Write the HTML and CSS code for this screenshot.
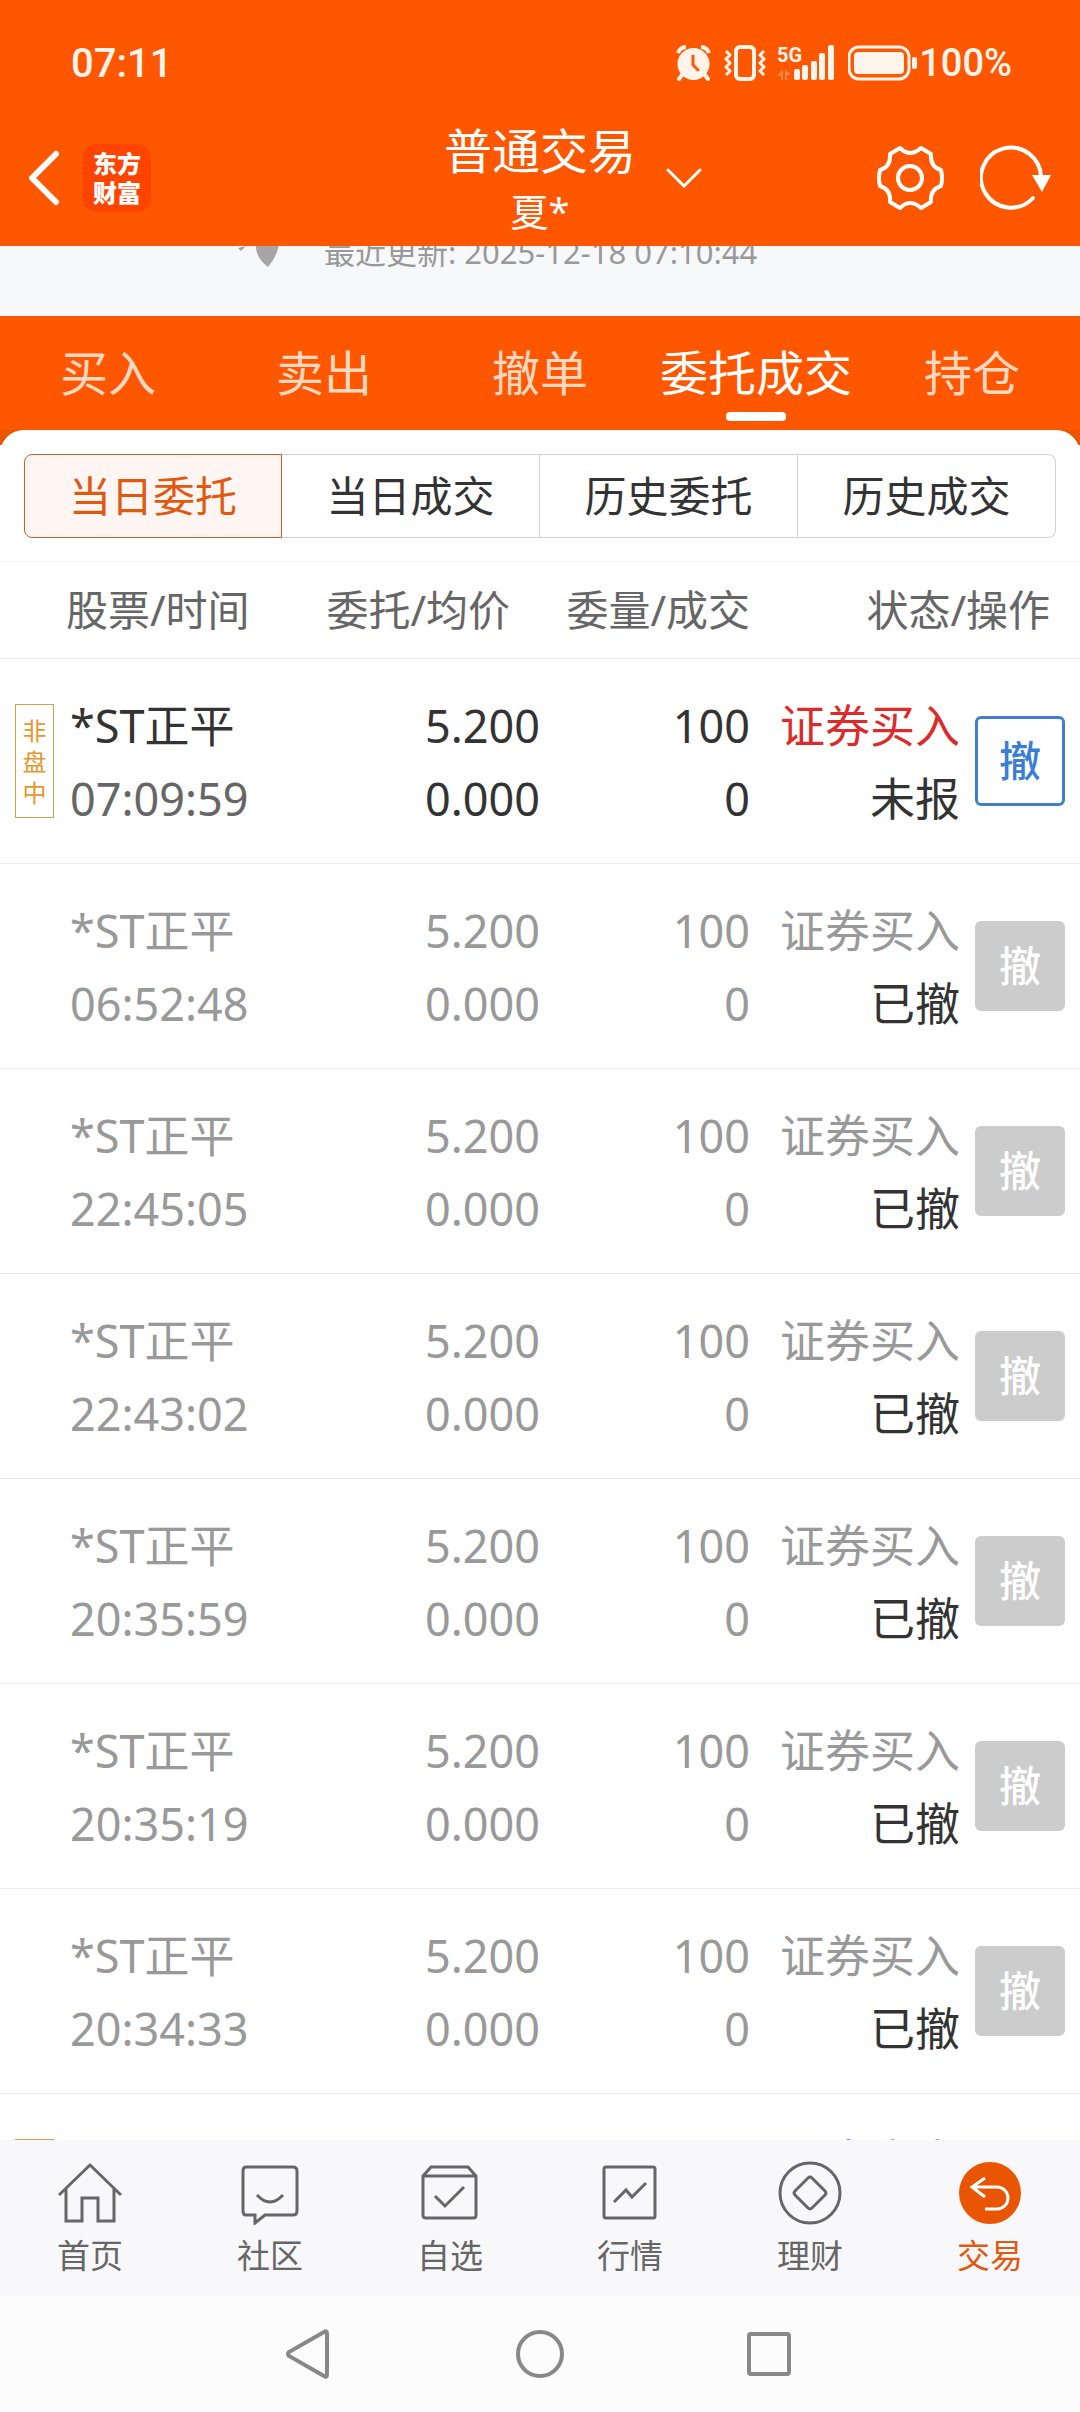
FILE: index.html
```html
<!DOCTYPE html>
<html lang="zh-CN">
<head>
<meta charset="utf-8">
<meta name="viewport" content="width=device-width, initial-scale=1">
<title>普通交易</title>
<link rel="stylesheet" href="styles.css">
</head>
<body>
<header class="header">
  <div class="status-bar">
    <span class="clock">07:11</span>
    <div class="status-icons">
      <svg class="icon-alarm" width="35" height="36" viewBox="0 0 35 36" aria-hidden="true">
        <circle cx="17.500" cy="19" r="16" fill="currentColor"/>
        <path d="M2 8A9 9 0 0 1 10 2M33 8A9 9 0 0 0 25 2" fill="none" stroke="currentColor" stroke-width="4"/>
        <path d="M6 30L3 34M29 30L32 34" stroke="currentColor" stroke-width="4" stroke-linecap="round"/>
        <path d="M17 11V20L22 25" fill="none" stroke="#ff5700" stroke-width="3" stroke-linecap="round"/>
      </svg>
      <svg class="icon-vibrate" width="42" height="36" viewBox="0 0 42 36" fill="none" stroke="currentColor" aria-hidden="true">
        <rect x="12" y="2" width="18" height="32" rx="4" stroke-width="4"/>
        <path d="M2 6L6 10L2 14L6 18L2 22L6 26L2 30M40 6L36 10L40 14L36 18L40 22L36 26L40 30" stroke-width="3" stroke-linejoin="round"/>
      </svg>
      <svg class="icon-signal" width="57" height="36" viewBox="0 0 57 36" fill="currentColor" aria-hidden="true">
        <text class="signal-label" x="0" y="17">5G</text>
        <path d="M6 24V35H4V31H0ZM8 24L14 30H10V35H8Z" opacity="0.300"/>
        <rect x="17" y="24" width="6" height="11" rx="2"/>
        <rect x="25" y="20" width="6" height="15" rx="2"/>
        <rect x="34" y="16" width="6" height="19" rx="2"/>
        <rect x="42" y="8" width="6" height="27" rx="2"/>
        <rect x="51" y="0" width="6" height="35" rx="2"/>
      </svg>
      <svg class="icon-battery" width="69" height="36" viewBox="0 0 69 36" aria-hidden="true">
        <rect x="1" y="2" width="60" height="32" rx="10" fill="none" stroke="currentColor" stroke-width="3"/>
        <rect x="6" y="7" width="50" height="22" rx="4" fill="currentColor"/>
        <rect x="64" y="12" width="5" height="12" rx="2" fill="currentColor"/>
      </svg>
      <span class="battery-level">100%</span>
    </div>
  </div>
  <div class="title-bar">
    <div class="title-left">
      <button class="icon-button" type="button" aria-label="返回">
        <svg width="32" height="56" viewBox="0 0 32 56" fill="none" stroke="currentColor" stroke-width="6" stroke-linecap="round" stroke-linejoin="round"><path d="M28 4L4 28L28 52"/></svg>
      </button>
      <span class="logo"><span>东方</span><span>财富</span></span>
    </div>
    <button class="account" type="button">
      <span class="account-text"><span class="account-title">普通交易</span><span class="account-name">夏*</span></span>
      <svg class="account-arrow" width="36" height="20" viewBox="0 0 36 20" fill="none" stroke="currentColor" stroke-width="3" stroke-linecap="round"><path d="M2 2L18 18L34 2"/></svg>
    </button>
    <div class="title-right">
      <button class="icon-button" type="button" aria-label="设置">
        <svg width="67" height="66" viewBox="0 -1 67 66" fill="none" stroke="currentColor" stroke-width="4" stroke-linejoin="round"><path d="M23 2Q33 12 44 2L54 8Q53 21 64 24Q66 32 64 40Q53 43 54 56L44 62Q33 52 23 62L13 56Q14 43 3 40Q1 32 3 24Q14 21 13 8Z"/><circle cx="33" cy="32" r="12"/></svg>
      </button>
      <button class="icon-button" type="button" aria-label="刷新">
        <svg width="72" height="66" viewBox="0 0 72 66"><path d="M61 33A30 30 0 1 0 53 53" fill="none" stroke="currentColor" stroke-width="4" stroke-linecap="round"/><path d="M52 30H71L62 47Z" fill="currentColor"/></svg>
      </button>
    </div>
  </div>
</header>

<div class="notice">
  <svg class="notice-icon" width="42" height="40" viewBox="0 0 42 40" fill="#a6a6a6" aria-hidden="true"><path d="M0 16L8 14L3 19ZM18 13H41Q38 26 30 35Q17 25 18 13Z"/></svg>
  <span class="notice-text">最近更新: 2025-12-18 07:10:44</span>
</div>

<nav class="tabs">
  <a class="tab" href="#buy">买入</a>
  <a class="tab" href="#sell">卖出</a>
  <a class="tab" href="#cancel">撤单</a>
  <a class="tab tab-active" href="#orders">委托成交</a>
  <a class="tab" href="#positions">持仓</a>
</nav>

<main class="content">
  <section class="card">
    <div class="segments">
      <button class="segment segment-active" type="button">当日委托</button>
      <button class="segment" type="button">当日成交</button>
      <button class="segment" type="button">历史委托</button>
      <button class="segment" type="button">历史成交</button>
    </div>
    <table class="orders">
      <colgroup><col class="col-badge"><col class="col-name"><col class="col-price"><col class="col-amount"><col class="col-status"><col class="col-action"></colgroup>
      <thead>
        <tr><th></th><th class="head-name">股票/时间</th><th class="head-inset">委托/均价</th><th>委量/成交</th><th class="head-inset" colspan="2">状态/操作</th></tr>
      </thead>
      <tbody>
        <tr class="order order-open">
          <td class="cell-badge"><span class="badge"><span>非</span><span>盘</span><span>中</span></span></td>
          <td class="cell-name"><div>*ST正平</div><div class="time">07:09:59</div></td>
          <td><div>5.200</div><div>0.000</div></td>
          <td><div>100</div><div>0</div></td>
          <td><div class="side side-buy">证券买入</div><div class="state">未报</div></td>
          <td class="cell-action"><button class="cancel" type="button">撤</button></td>
        </tr>
        <tr class="order">
          <td></td>
          <td class="cell-name"><div>*ST正平</div><div>06:52:48</div></td>
          <td><div>5.200</div><div>0.000</div></td>
          <td><div>100</div><div>0</div></td>
          <td><div>证券买入</div><div class="state">已撤</div></td>
          <td class="cell-action"><button class="cancel" type="button" disabled>撤</button></td>
        </tr>
        <tr class="order">
          <td></td>
          <td class="cell-name"><div>*ST正平</div><div>22:45:05</div></td>
          <td><div>5.200</div><div>0.000</div></td>
          <td><div>100</div><div>0</div></td>
          <td><div>证券买入</div><div class="state">已撤</div></td>
          <td class="cell-action"><button class="cancel" type="button" disabled>撤</button></td>
        </tr>
        <tr class="order">
          <td></td>
          <td class="cell-name"><div>*ST正平</div><div>22:43:02</div></td>
          <td><div>5.200</div><div>0.000</div></td>
          <td><div>100</div><div>0</div></td>
          <td><div>证券买入</div><div class="state">已撤</div></td>
          <td class="cell-action"><button class="cancel" type="button" disabled>撤</button></td>
        </tr>
        <tr class="order">
          <td></td>
          <td class="cell-name"><div>*ST正平</div><div>20:35:59</div></td>
          <td><div>5.200</div><div>0.000</div></td>
          <td><div>100</div><div>0</div></td>
          <td><div>证券买入</div><div class="state">已撤</div></td>
          <td class="cell-action"><button class="cancel" type="button" disabled>撤</button></td>
        </tr>
        <tr class="order">
          <td></td>
          <td class="cell-name"><div>*ST正平</div><div>20:35:19</div></td>
          <td><div>5.200</div><div>0.000</div></td>
          <td><div>100</div><div>0</div></td>
          <td><div>证券买入</div><div class="state">已撤</div></td>
          <td class="cell-action"><button class="cancel" type="button" disabled>撤</button></td>
        </tr>
        <tr class="order">
          <td></td>
          <td class="cell-name"><div>*ST正平</div><div>20:34:33</div></td>
          <td><div>5.200</div><div>0.000</div></td>
          <td><div>100</div><div>0</div></td>
          <td><div>证券买入</div><div class="state">已撤</div></td>
          <td class="cell-action"><button class="cancel" type="button" disabled>撤</button></td>
        </tr>
        <tr class="order">
          <td class="cell-badge"><span class="badge"><span>非</span><span>盘</span><span>中</span></span></td>
          <td></td>
          <td></td>
          <td></td>
          <td><div class="side side-sell">证券卖出</div><div>&nbsp;</div></td>
          <td></td>
        </tr>
      </tbody>
    </table>
  </section>
</main>

<nav class="bottom-nav">
  <a class="nav-item" href="#home">
    <svg class="nav-icon" viewBox="0 0 64 64"><path d="M1 34L32 4L63 34M8 28V60H24V37H40V60H56V28"/></svg>
    <span>首页</span>
  </a>
  <a class="nav-item" href="#community">
    <svg class="nav-icon" viewBox="0 0 64 64"><path d="M8 6H55Q59 6 59 10V50Q59 54 55 54H27L17 62V54H8Q5 54 5 50V10Q5 6 8 6ZM19 34Q32 48 45 34"/></svg>
    <span>社区</span>
  </a>
  <a class="nav-item" href="#watchlist">
    <svg class="nav-icon" viewBox="0 0 64 64"><path d="M5 15L13 6H50L58 15V54Q58 57 55 57H8Q5 57 5 54ZM5 15H58M17 35L27 45L46 26"/></svg>
    <span>自选</span>
  </a>
  <a class="nav-item" href="#market">
    <svg class="nav-icon" viewBox="0 0 64 64"><rect x="6" y="6" width="51" height="51" rx="2"/><path d="M16 41L28 29L34 36L48 22"/></svg>
    <span>行情</span>
  </a>
  <a class="nav-item" href="#wealth">
    <svg class="nav-icon" viewBox="0 0 64 64"><circle cx="32" cy="32" r="30"/><path d="M30 17Q32 15 34 17L47 30Q49 32 47 34L34 47Q32 49 30 47L17 34Q15 32 17 30Z"/></svg>
    <span>理财</span>
  </a>
  <a class="nav-item nav-active" href="#trade">
    <svg class="nav-icon" viewBox="0 0 64 64"><circle class="nav-disc" cx="32" cy="32" r="31"/><path class="nav-arrow" d="M27 17L14 26L27 36M14 26H39A11 11 0 0 1 39 48H27"/></svg>
    <span>交易</span>
  </a>
</nav>

<div class="system-nav">
  <button class="system-button" type="button" aria-label="后退"><svg width="52" height="52" viewBox="0 0 52 52"><path d="M40 4Q43 2 43 6V46Q43 50 40 48L5 28Q3 26 5 24Z"/></svg></button>
  <button class="system-button" type="button" aria-label="主屏幕"><svg width="52" height="52" viewBox="0 0 52 52"><circle cx="26" cy="26" r="22"/></svg></button>
  <button class="system-button" type="button" aria-label="最近任务"><svg width="52" height="52" viewBox="0 0 52 52"><rect x="5" y="6" width="40" height="40" rx="2"/></svg></button>
</div>
</body>
</html>
```
FILE: styles.css
```css
* {
  box-sizing: border-box;
}

body {
  margin: 0;
  height: 100vh;
  display: flex;
  flex-direction: column;
  background: #fff;
  color: #333;
  font-family: "Noto Sans", "Noto Sans CJK SC", sans-serif;
}

button {
  margin: 0;
  padding: 0;
  border: 0;
  background: none;
  color: inherit;
  font: inherit;
}

a {
  color: inherit;
  text-decoration: none;
}

svg {
  display: block;
  flex: none;
}

/* Header */

.header {
  flex: none;
  background: #ff5700;
  color: #fff;
}

.status-bar {
  height: 110px;
  padding: 16px 68px 0 71px;
  display: flex;
  align-items: center;
  justify-content: space-between;
  color: #fff4ec;
  font-family: Roboto, sans-serif;
  font-weight: 500;
}

.clock {
  font-size: 40px;
}

.status-icons {
  display: flex;
  align-items: center;
}

.icon-vibrate {
  margin-left: 13px;
}

.icon-signal {
  margin-left: 11px;
  overflow: visible;
}

.signal-label {
  font-size: 20px;
  font-weight: 700;
}

.icon-battery {
  margin-left: 14px;
}

.battery-level {
  margin-left: 2px;
  font-size: 38px;
}

.title-bar {
  height: 136px;
  padding: 0 28px;
  display: grid;
  grid-template-columns: 1fr auto 1fr;
  align-items: center;
}

.title-left {
  display: flex;
  align-items: center;
  gap: 23px;
}

.logo {
  width: 68px;
  height: 68px;
  display: flex;
  flex-direction: column;
  align-items: center;
  justify-content: center;
  border-radius: 14px;
  background: #ff4400;
  font-size: 24px;
  font-weight: 900;
  line-height: 29px;
}

.account {
  padding-left: 66px;
  display: flex;
  align-items: center;
  gap: 30px;
}

.account-text {
  padding-top: 6px;
  display: flex;
  flex-direction: column;
  line-height: 60px;
}

.account-title {
  font-size: 48px;
}

.account-name {
  font-size: 38px;
}

.title-right {
  display: flex;
  align-items: center;
  justify-content: flex-end;
  gap: 36px;
}

/* Scrolled refresh line */

.notice {
  flex: none;
  height: 70px;
  padding-left: 238px;
  display: flex;
  align-items: flex-start;
  gap: 44px;
  overflow: hidden;
  background: #f7f8fa;
  color: #999;
  font-size: 31px;
  line-height: 40px;
}

.notice-icon,
.notice-text {
  margin-top: -14px;
}

/* Trade tabs */

.tabs {
  flex: none;
  height: 114px;
  display: grid;
  grid-template-columns: repeat(5, 1fr);
  background: #ff5700;
  color: #ffd8c2;
  font-size: 48px;
}

.tab {
  position: relative;
  padding-bottom: 6px;
  display: flex;
  align-items: center;
  justify-content: center;
}

.tab-active {
  color: #fff;
}

.tab-active::after {
  content: "";
  position: absolute;
  bottom: 9px;
  width: 60px;
  height: 9px;
  border-radius: 4px;
  background: #fff;
}

/* Orders */

.content {
  flex: 1;
  min-height: 0;
  overflow: hidden;
  background: linear-gradient(#ea5504 15px, #fff 15px);
}

.card {
  border-radius: 24px 24px 0 0;
  background: #fff;
}

.segments {
  padding: 24px 24px 23px;
  display: grid;
  grid-template-columns: repeat(4, 1fr);
}

.segment {
  height: 84px;
  padding-bottom: 6px;
  border: 1px solid #d4d4d4;
  border-left-width: 0;
  font-size: 42px;
}

.segment:last-child {
  border-radius: 0 8px 8px 0;
}

.segment-active {
  border: 1px solid #c8602c;
  border-radius: 8px 0 0 8px;
  background: #fff6f3;
  color: #e0590f;
}

.orders {
  width: 100%;
  table-layout: fixed;
  border-collapse: separate;
  border-spacing: 0;
}

.col-badge {
  width: 66px;
}

.col-name {
  width: auto;
}

.col-price {
  width: 20%;
}

.col-amount,
.col-status {
  width: 210px;
}

.col-action {
  width: 120px;
}

.orders th,
.orders td {
  padding: 0;
  border-bottom: 1px solid #ebebeb;
  text-align: right;
  vertical-align: middle;
  white-space: nowrap;
}

.orders th {
  height: 98px;
  padding-bottom: 6px;
  border-top: 1px solid #f4f4f4;
  color: #666;
  font-size: 42px;
  font-weight: 400;
}

.orders .head-inset {
  padding-right: 30px;
}

.orders td {
  height: 205px;
  padding-top: 2px;
  color: #999;
  font-size: 45px;
  line-height: 73px;
}

.orders .head-name,
.orders .cell-name {
  text-align: left;
}

.orders .cell-name {
  padding-left: 4px;
}

.orders .order-open td {
  color: #333;
}

.order .time {
  color: #666;
}

.order .side-buy {
  color: #dd2a2a;
}

.order .side-sell {
  color: #2e8b3a;
}

.order .state {
  color: #333;
}

.orders .cell-badge {
  padding: 0 0 0 15px;
}

.badge {
  width: 39px;
  height: 114px;
  display: flex;
  flex-direction: column;
  align-items: center;
  justify-content: center;
  border: 1px solid #d2a04e;
  color: #e8962e;
  font-size: 24px;
  line-height: 31px;
}

.orders .cell-action {
  padding: 0 15px;
}

.cancel {
  width: 90px;
  height: 90px;
  display: block;
  border: 3px solid #3f7fcc;
  border-radius: 6px;
  color: #3a7fd5;
  font-size: 42px;
  font-weight: 500;
  line-height: 1;
}

.cancel:disabled {
  border-color: #ccc;
  background: #ccc;
  color: #fff;
}

/* App navigation */

.bottom-nav {
  flex: none;
  height: 156px;
  padding-top: 21px;
  display: grid;
  grid-template-columns: repeat(6, 1fr);
  background: #f8f8fa;
  color: #666;
  font-size: 33px;
  line-height: 48px;
}

.nav-item {
  display: flex;
  flex-direction: column;
  align-items: center;
  gap: 7px;
}

.nav-icon {
  width: 64px;
  height: 64px;
  fill: none;
  stroke: currentColor;
  stroke-width: 3;
}

.nav-active {
  color: #e0590f;
}

.nav-disc {
  fill: #ea5504;
  stroke: none;
}

.nav-arrow {
  stroke: #fff;
}

/* System navigation */

.system-nav {
  flex: none;
  height: 116px;
  display: flex;
  justify-content: center;
  background: #fcfcfc;
}

.system-button {
  width: 230px;
  display: flex;
  align-items: center;
  justify-content: center;
}

.system-button svg {
  fill: none;
  stroke: #888;
  stroke-width: 4;
}
```
